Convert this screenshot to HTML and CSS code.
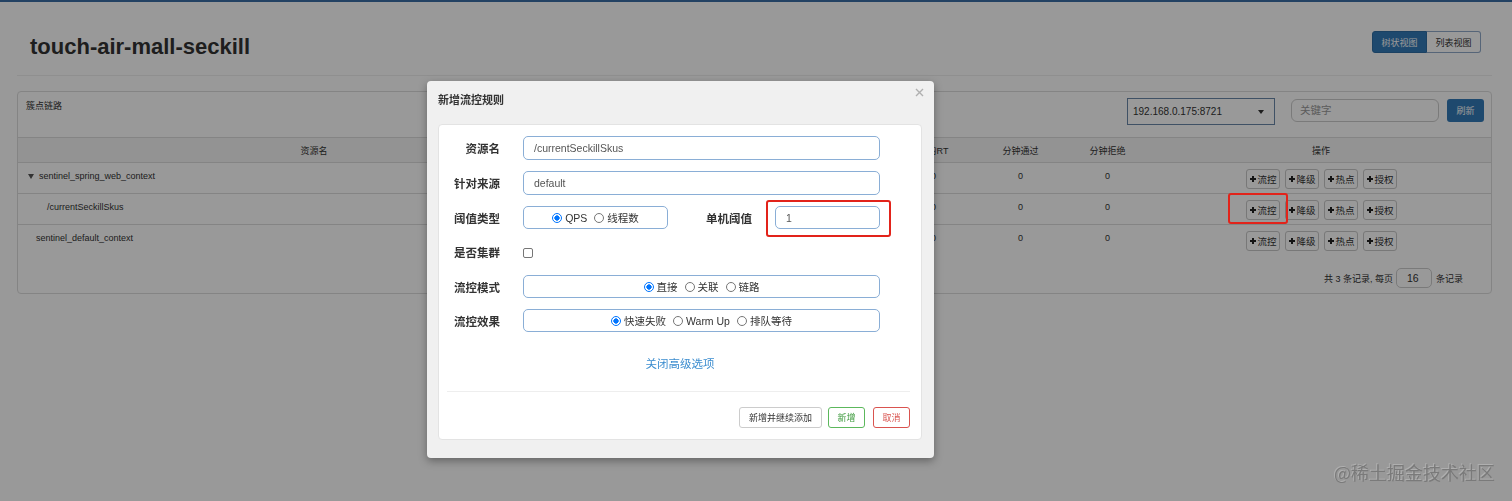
FILE: index.html
```html
<!DOCTYPE html>
<html lang="zh-CN">
<head>
<meta charset="utf-8">
<title>Sentinel 控制台</title>
<link rel="stylesheet" href="styles.css">
</head>
<body>
<div class="topbar"></div>
<div class="page">
  <div class="page-header">
    <h1 class="app-title">touch-air-mall-seckill</h1>
    <div class="view-switch">
      <span class="seg seg-active">树状视图</span>
      <span class="seg seg-plain">列表视图</span>
    </div>
  </div>
  <div class="panel">
    <div class="panel-head">
      <span class="panel-title">簇点链路</span>
      <div class="tools">
        <div class="select"><span>192.168.0.175:8721</span><span class="caret"></span></div>
        <div class="search">关键字</div>
        <span class="btn-primary">刷新</span>
      </div>
    </div>
    <div class="thead">
      <span>资源名</span><span>通过QPS</span><span>拒绝QPS</span><span>并发数</span><span>平均RT</span><span>分钟通过</span><span>分钟拒绝</span><span>操作</span>
    </div>
    <div class="trow">
      <span class="c c-name lvl0"><span class="tri"></span>sentinel_spring_web_context</span>
      <span class="c">0</span><span class="c">0</span><span class="c">0</span><span class="c">0</span><span class="c">0</span><span class="c">0</span>
      <span class="c-ops">
        <span class="op"><svg class="plus" width="6" height="6" viewBox="0 0 6 6"><path d="M3 0V6M0 3H6"/></svg>流控</span>
        <span class="op"><svg class="plus" width="6" height="6" viewBox="0 0 6 6"><path d="M3 0V6M0 3H6"/></svg>降级</span>
        <span class="op"><svg class="plus" width="6" height="6" viewBox="0 0 6 6"><path d="M3 0V6M0 3H6"/></svg>热点</span>
        <span class="op"><svg class="plus" width="6" height="6" viewBox="0 0 6 6"><path d="M3 0V6M0 3H6"/></svg>授权</span>
      </span>
    </div>
    <div class="trow">
      <span class="c c-name lvl1">/currentSeckillSkus</span>
      <span class="c">0</span><span class="c">0</span><span class="c">0</span><span class="c">0</span><span class="c">0</span><span class="c">0</span>
      <span class="c-ops">
        <span class="op"><svg class="plus" width="6" height="6" viewBox="0 0 6 6"><path d="M3 0V6M0 3H6"/></svg>流控</span>
        <span class="op"><svg class="plus" width="6" height="6" viewBox="0 0 6 6"><path d="M3 0V6M0 3H6"/></svg>降级</span>
        <span class="op"><svg class="plus" width="6" height="6" viewBox="0 0 6 6"><path d="M3 0V6M0 3H6"/></svg>热点</span>
        <span class="op"><svg class="plus" width="6" height="6" viewBox="0 0 6 6"><path d="M3 0V6M0 3H6"/></svg>授权</span>
      </span>
    </div>
    <div class="trow">
      <span class="c c-name lvl2">sentinel_default_context</span>
      <span class="c">0</span><span class="c">0</span><span class="c">0</span><span class="c">0</span><span class="c">0</span><span class="c">0</span>
      <span class="c-ops">
        <span class="op"><svg class="plus" width="6" height="6" viewBox="0 0 6 6"><path d="M3 0V6M0 3H6"/></svg>流控</span>
        <span class="op"><svg class="plus" width="6" height="6" viewBox="0 0 6 6"><path d="M3 0V6M0 3H6"/></svg>降级</span>
        <span class="op"><svg class="plus" width="6" height="6" viewBox="0 0 6 6"><path d="M3 0V6M0 3H6"/></svg>热点</span>
        <span class="op"><svg class="plus" width="6" height="6" viewBox="0 0 6 6"><path d="M3 0V6M0 3H6"/></svg>授权</span>
      </span>
    </div>
    <div class="pager">
      <span>共 3 条记录, 每页</span>
      <span class="page-size">16</span>
      <span>条记录</span>
    </div>
  </div>
</div>

<div class="mask"></div>
<div class="annot annot-row"></div>

<div class="modal">
  <div class="modal-head">新增流控规则</div>
  <svg class="close" width="9" height="9" viewBox="0 0 9 9"><path d="M1 1L8 8M8 1L1 8"/></svg>
  <div class="card">
    <div class="frow">
      <span class="flabel">资源名</span>
      <span class="finput">/currentSeckillSkus</span>
    </div>
    <div class="frow">
      <span class="flabel">针对来源</span>
      <span class="finput">default</span>
    </div>
    <div class="frow frow-sm">
      <span class="flabel">阈值类型</span>
      <span class="rbox rbox-small">
        <span class="opt"><span class="rd on"></span>QPS</span>
        <span class="opt"><span class="rd"></span>线程数</span>
      </span>
      <span class="flabel flabel-2">单机阈值</span>
      <span class="finput finput-small">1</span>
    </div>
    <div class="frow">
      <span class="flabel">是否集群</span>
      <span class="chk"></span>
    </div>
    <div class="frow frow-sm">
      <span class="flabel">流控模式</span>
      <span class="rbox">
        <span class="opt"><span class="rd on"></span>直接</span>
        <span class="opt"><span class="rd"></span>关联</span>
        <span class="opt"><span class="rd"></span>链路</span>
      </span>
    </div>
    <div class="frow frow-sm">
      <span class="flabel">流控效果</span>
      <span class="rbox">
        <span class="opt"><span class="rd on"></span>快速失败</span>
        <span class="opt"><span class="rd"></span>Warm Up</span>
        <span class="opt"><span class="rd"></span>排队等待</span>
      </span>
    </div>
    <div class="adv">关闭高级选项</div>
    <div class="sep"></div>
    <div class="foot">
      <span class="btn btn-cont">新增并继续添加</span>
      <span class="btn btn-ok">新增</span>
      <span class="btn btn-cancel">取消</span>
    </div>
  </div>
  <div class="annot annot-modal"></div>
</div>

<div class="watermark">@稀土掘金技术社区</div>
</body>
</html>
```

FILE: styles.css
```css
html, body {
  margin: 0;
  padding: 0;
}
body {
  width: 1512px;
  height: 501px;
  overflow: hidden;
  position: relative;
  background: #fff;
  color: #333;
  font-family: "Liberation Sans", "Noto Sans CJK SC", sans-serif;
}

.topbar {
  height: 2px;
  background: #3b6ea5;
}

.page {
  padding: 0 20px 0 17px;
}

.page-header {
  display: flex;
  justify-content: space-between;
  align-items: flex-start;
  padding: 29px 11px 15px 13px;
  border-bottom: 1px solid #eee;
}

.app-title {
  margin: 3px 0 0;
  font-size: 22px;
  line-height: 26px;
  font-weight: bold;
  color: #333;
}

.view-switch {
  display: flex;
}
.seg {
  height: 22px;
  box-sizing: border-box;
  display: flex;
  align-items: center;
  justify-content: center;
  font-size: 9px;
  border: 1px solid #2e6da4;
}
.seg-active {
  width: 55px;
  background: #337ab7;
  color: #fff;
  border-radius: 3px 0 0 3px;
}
.seg-plain {
  width: 54px;
  background: #fff;
  color: #333;
  border-color: #8fa8c8;
  border-left: none;
  border-radius: 0 3px 3px 0;
}

.panel {
  margin-top: 15px;
  border: 1px solid #ddd;
  border-radius: 4px;
}

.panel-head {
  display: flex;
  justify-content: space-between;
  align-items: flex-start;
  height: 45px;
  box-sizing: border-box;
  padding: 6px 7px 0 8px;
}
.panel-title {
  margin-top: 2px;
  font-size: 9px;
  line-height: 12px;
}
.tools {
  display: flex;
  align-items: flex-start;
}
.select {
  width: 148px;
  height: 27px;
  box-sizing: border-box;
  border: 1px solid #6a88a8;
  display: flex;
  align-items: center;
  justify-content: space-between;
  padding: 0 10px 0 5px;
  font-size: 10px;
  color: #333;
}
.caret {
  width: 0;
  height: 0;
  border-left: 3.5px solid transparent;
  border-right: 3.5px solid transparent;
  border-top: 4px solid #333;
}
.search {
  width: 148px;
  height: 23px;
  margin: 1px 0 0 16px;
  box-sizing: border-box;
  border: 1px solid #ccc;
  border-radius: 6px;
  padding-left: 8px;
  font-size: 10.5px;
  line-height: 21px;
  color: #999;
}
.btn-primary {
  width: 37px;
  height: 23px;
  margin: 1px 0 0 8px;
  background: #337ab7;
  color: #fff;
  border-radius: 3px;
  font-size: 9px;
  display: flex;
  align-items: center;
  justify-content: center;
}

.thead,
.trow {
  display: grid;
  grid-template-columns: 592px 93px 93px 94px 87px 87px 87px 340px;
  font-size: 9px;
}
.thead {
  height: 24px;
  background: #f5f5f5;
  border-top: 1px solid #ddd;
  align-items: center;
  text-align: center;
}
.trow {
  height: 30px;
  border-top: 1px solid #ddd;
}
.c {
  text-align: center;
  padding-top: 6px;
  line-height: 14px;
}
.c-name {
  text-align: left;
  display: flex;
  align-items: center;
  height: 14px;
}
.lvl0 { padding-left: 10px; }
.lvl1 { padding-left: 29px; }
.lvl2 { padding-left: 18px; }
.tri {
  width: 0;
  height: 0;
  border-left: 3px solid transparent;
  border-right: 3px solid transparent;
  border-top: 5px solid #555;
  margin-right: 5px;
  margin-top: 1px;
}
.c-ops {
  display: flex;
  justify-content: center;
  gap: 5px;
  padding-top: 6px;
}
.op {
  width: 34px;
  height: 20px;
  box-sizing: border-box;
  padding: 0 1px 0 3px;
  border: 1px solid #c8c8c8;
  border-radius: 3px;
  background: #fff;
  display: flex;
  align-items: center;
  justify-content: center;
  gap: 1px;
  font-size: 9.5px;
  color: #333;
}
.plus path {
  stroke: #222;
  stroke-width: 2;
  fill: none;
}

.pager {
  display: flex;
  justify-content: flex-end;
  align-items: center;
  padding: 13px 28px 5px 0;
  font-size: 9px;
}
.page-size {
  width: 36px;
  height: 20px;
  box-sizing: border-box;
  margin: 0 4px 0 3px;
  border: 1px solid #ccc;
  border-radius: 5px;
  padding-left: 10px;
  font-size: 10.5px;
  line-height: 18px;
}

.mask {
  position: fixed;
  inset: 0;
  background: rgba(0, 0, 0, 0.4);
}

.annot {
  position: absolute;
  box-sizing: border-box;
  border: 2px solid #e2231a;
  border-radius: 3px;
}
.annot-row {
  left: 1228px;
  top: 193px;
  width: 60px;
  height: 31px;
}
.annot-modal {
  left: 339px;
  top: 119px;
  width: 125px;
  height: 37px;
}

.modal {
  position: absolute;
  left: 427px;
  top: 81px;
  width: 507px;
  box-sizing: border-box;
  padding: 0 12px 18px 11px;
  background: #f0f0f0;
  border-radius: 4px;
  box-shadow: 0 3px 9px rgba(0, 0, 0, 0.35);
}
.modal-head {
  height: 43px;
  box-sizing: border-box;
  padding-top: 12px;
  font-size: 11px;
  line-height: 14px;
  font-weight: bold;
  color: #333;
}
.close {
  position: absolute;
  top: 7px;
  right: 10px;
}
.close path {
  stroke: #b0b0b0;
  stroke-width: 1.4;
  fill: none;
}

.card {
  background: #fff;
  border: 1px solid #e3e3e3;
  border-radius: 4px;
  padding: 11px 0;
}
.frow {
  display: flex;
  align-items: center;
  height: 24px;
}
.frow + .frow {
  margin-top: 11px;
}
.frow-sm {
  height: 23px;
}
.flabel {
  flex: none;
  width: 61px;
  margin-right: 23px;
  text-align: right;
  font-size: 11.5px;
  font-weight: bold;
  color: #333;
}
.flabel-2 {
  width: 84px;
}
.finput {
  width: 357px;
  height: 24px;
  box-sizing: border-box;
  border: 1px solid #8aaed6;
  border-radius: 5px;
  padding-left: 10px;
  display: flex;
  align-items: center;
  font-size: 10.5px;
  color: #555;
}
.finput-small {
  width: 105px;
  height: 23px;
}
.rbox {
  width: 357px;
  height: 23px;
  box-sizing: border-box;
  border: 1px solid #8aaed6;
  border-radius: 5px;
  display: flex;
  align-items: center;
  justify-content: center;
  font-size: 10.5px;
  color: #333;
}
.rbox-small {
  width: 145px;
}
.opt {
  display: flex;
  align-items: center;
  margin: 0 3.5px;
}
.rd {
  width: 10px;
  height: 10px;
  box-sizing: border-box;
  border: 1px solid #767676;
  border-radius: 50%;
  margin-right: 3px;
  background: #fff;
}
.rd.on {
  border-color: #0075ff;
  background: radial-gradient(circle, #0075ff 0 2.4px, #fff 2.9px);
}
.chk {
  width: 10px;
  height: 10px;
  box-sizing: border-box;
  border: 1px solid #767676;
  border-radius: 2px;
  margin-top: 2px;
}
.adv {
  margin-top: 24px;
  text-align: center;
  font-size: 11.5px;
  line-height: 16px;
  color: #3c8dcf;
}
.sep {
  height: 1px;
  background: #eee;
  margin: 19px 11px 0 8px;
}
.foot {
  display: flex;
  justify-content: flex-end;
  margin: 15px 11px 0 0;
}
.btn {
  height: 21px;
  box-sizing: border-box;
  border: 1px solid #ccc;
  border-radius: 3px;
  background: #fff;
  display: flex;
  align-items: center;
  justify-content: center;
  font-size: 9px;
  color: #333;
}
.btn-cont {
  width: 83px;
}
.btn-ok {
  width: 37px;
  margin-left: 6px;
  border-color: #5cb85c;
  color: #3c9a3c;
}
.btn-cancel {
  width: 37px;
  margin-left: 8px;
  border-color: #d9534f;
  color: #d9534f;
}

.watermark {
  position: fixed;
  right: 17px;
  bottom: 18px;
  font-family: "Noto Sans CJK SC", sans-serif;
  font-size: 18px;
  line-height: 22px;
  color: #7a7a7a;
  text-shadow: -1px -1px 0 rgba(255, 255, 255, 0.22);
}
```
